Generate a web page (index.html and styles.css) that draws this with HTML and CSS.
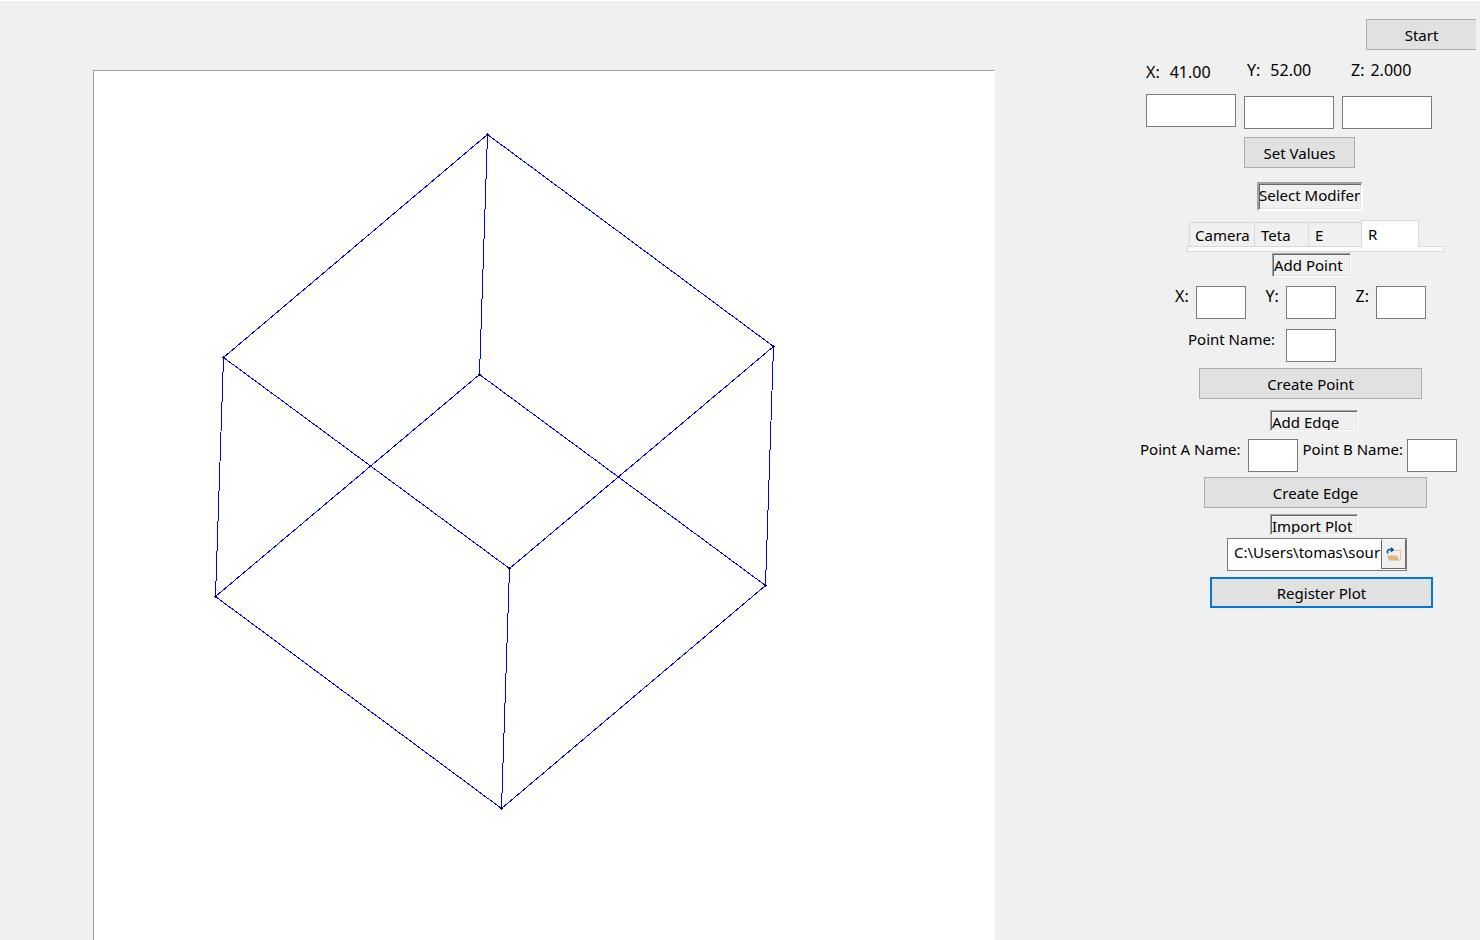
FILE: index.html
```html
<!DOCTYPE html>
<html lang="en">
<head>
<meta charset="utf-8">
<title>3D Plot</title>
<link rel="stylesheet" href="styles.css">
</head>
<body>
<main class="app">
  <section class="canvas">
    <svg class="plot" viewBox="0 0 900 869" preserveAspectRatio="xMinYMin meet" role="img" aria-label="Wireframe cube">
      <g class="edges">
        <path d="M393.5 63.5L129.500 286.500M393.500 63.500L679.500 275.500M393.500 63.500L385.500 303.500"/>
        <path d="M129.500 286.500L121.500 525.500M129.500 286.500L415.500 497.500"/>
        <path d="M385.500 303.500L121.500 525.500M385.500 303.500L671.500 514.500"/>
        <path d="M679.500 275.500L415.500 497.500M679.500 275.500L671.500 514.500"/>
        <path d="M121.500 525.500L407.500 737.500M415.500 497.500L407.500 737.500M671.500 514.500L407.500 737.500"/>
      </g>
      <g class="points">
        <path d="M392 63h3M393.500 62v3M128 286h3M129.500 285v3M678 275h3M679.500 274v3M384 303h3M385.500 302v3M120 525h3M121.500 524v3M414 497h3M415.500 496v3M670 514h3M671.500 513v3M406 737h3M407.500 736v3"/>
      </g>
    </svg>
  </section>
  <aside class="panel">
    <button class="button start">Start</button>
    <div class="coords">
      <div class="coord coord-first"><label for="vx"><span>X:</span><span>41.00</span></label><input id="vx" class="field wide"></div>
      <div class="coord"><label for="vy"><span>Y:</span><span>52.00</span></label><input id="vy" class="field wide"></div>
      <div class="coord coord-last"><label for="vz"><span>Z:</span><span>2.000</span></label><input id="vz" class="field wide"></div>
    </div>
    <button class="button set-values">Set Values</button>
    <h2 class="caption modifier">Select Modifer</h2>
    <div class="tabs">
      <div class="tablist" role="tablist">
        <button class="tab tab-wide" role="tab">Camera</button>
        <button class="tab" role="tab">Teta</button>
        <button class="tab tab-last" role="tab">E</button>
        <button class="tab active" role="tab" aria-selected="true">R</button>
      </div>
      <div class="tabpage"></div>
    </div>
    <h2 class="caption add-point">Add Point</h2>
    <div class="row point-row">
      <div class="pair"><label for="px">X:</label><input id="px" class="field"></div>
      <div class="pair"><label for="py">Y:</label><input id="py" class="field"></div>
      <div class="pair"><label for="pz">Z:</label><input id="pz" class="field"></div>
    </div>
    <div class="row name-row"><label for="pn">Point Name:</label><input id="pn" class="field"></div>
    <button class="button long create-point">Create Point</button>
    <h2 class="caption short add-edge">Add Edge</h2>
    <div class="row edge-row">
      <div class="pair"><label for="ea">Point A Name:</label><input id="ea" class="field"></div>
      <div class="pair"><label for="eb">Point B Name:</label><input id="eb" class="field"></div>
    </div>
    <button class="button long create-edge">Create Edge</button>
    <h2 class="caption short import">Import Plot</h2>
    <div class="path">
      <input class="path-text" aria-label="Plot file" value="C:\Users\tomas\sour">
      <button class="browse" aria-label="Browse">
        <svg width="16" height="16" viewBox="0 0 16 16">
          <path d="M8.500 4.500H14.500V14" fill="none" stroke="#e8c48c"/>
          <path d="M1 9.500h10l2.500 5H3z" fill="#dcb67a"/>
          <path d="M2 7.500C0 4 3.500 2.500 6.500 3.500" fill="none" stroke="#00539c" stroke-width="1.500"/>
          <path d="M5 1l3.500 3L4.500 6.500z" fill="#00539c"/>
        </svg>
      </button>
    </div>
    <button class="button long register">Register Plot</button>
  </aside>
</main>
</body>
</html>
```
FILE: styles.css
```css
* { box-sizing: border-box; }
body {
  margin: 0;
  background: #f0f0f0;
  color: #000;
  font: 15px/20px "Noto Sans", "Open Sans", sans-serif;
}
button, input { font: inherit; color: inherit; border-radius: 0; }
label { white-space: nowrap; }

.app {
  display: flex;
  height: 100vh;
  overflow: hidden;
  border-top: 1px solid #fff;
  padding-right: 4px;
}
.canvas {
  flex: 1;
  margin: 69px 145px 0 93px;
  background: #fff;
  border: 1px solid #a0a0a0;
  border-right-color: #fff;
  border-bottom: 0;
}
.plot { display: block; width: 100%; }
.edges { fill: none; stroke: #00f; shape-rendering: crispEdges; }
.points { fill: none; stroke: #000; shape-rendering: crispEdges; }

.panel {
  flex: 0 0 336px;
  display: flex;
  flex-direction: column;
  align-items: flex-start;
  padding-top: 18px;
}
.button {
  width: 111px;
  height: 31px;
  padding: 0;
  background: #e1e1e1;
  border: 1px solid #adadad;
}
.long { width: 223px; }
.start { width: 110px; align-self: flex-end; border-right: 0; }

.field {
  width: 50px;
  height: 33px;
  padding: 0 4px;
  background: #fff;
  border: 1px solid #7a7a7a;
}
.wide { width: 90px; }

.coords {
  display: flex;
  align-items: center;
  justify-content: space-between;
  width: 286px;
  margin: 10px 0 0 6px;
  font-size: 16px;
}
.coord { display: flex; flex-direction: column; gap: 16px; }
.coord-first { gap: 12px; }
.coord label { display: flex; gap: 10px; padding-left: 3px; }
.coord-first label { padding-left: 0; }
.coord-last label { padding-left: 9px; gap: 6px; }
.set-values { margin: 8px 0 0 104px; }

.caption {
  margin: 0;
  height: 24px;
  overflow: hidden;
  border: 1px solid;
  border-color: #a0a0a0 #fff #fff #a0a0a0;
  box-shadow: inset 1px 1px #696969, inset -1px -1px #e3e3e3;
  font: inherit;
  line-height: 22px;
  white-space: nowrap;
  padding-left: 1px;
}
.short { width: 88px; height: 21px; }
.modifier { width: 106px; height: 29px; border-width: 2px; margin: 14px 0 0 117px; padding-left: 0; }
.add-point { width: 79px; margin: 1px 0 0 132px; }
.add-edge { margin: 11px 0 0 130px; }
.import { margin: 6px 0 0 130px; }

.tabs { width: 257px; margin: 9px 0 0 47px; }
.tablist { display: flex; align-items: flex-end; padding-left: 2px; }
.tab {
  width: 54px;
  height: 24px;
  padding: 0 6px;
  text-align: left;
  background: #f0f0f0;
  border: 1px solid #d9d9d9;
  border-width: 1px 0 0 1px;
}
.tab-wide { width: 65px; padding: 0 5px; }
.tab-last { width: 53px; }
.active {
  position: relative;
  width: 58px;
  height: 27px;
  margin-bottom: -1px;
  padding: 0 6px 1px;
  background: #fff;
  border-width: 1px 1px 0;
}
.tabpage { height: 6px; background: #fff; border: 1px solid #d9d9d9; }

.row { display: flex; align-items: flex-start; }
.pair { display: flex; gap: 7px; }
.point-row { width: 251px; justify-content: space-between; margin: 9px 0 0 35px; font-size: 16px; }
.name-row { width: 148px; justify-content: space-between; margin: 10px 0 0 48px; }
.create-point { margin: 6px 0 0 59px; }
.edge-row { width: 317px; justify-content: space-between; margin-top: 8px; }
.edge-row .pair { gap: 8px; }
.edge-row .pair + .pair { gap: 4px; }
.create-edge { margin: 5px 0 0 64px; }

.path {
  display: flex;
  width: 180px;
  height: 33px;
  margin: 3px 0 0 87px;
  background: #fff;
  border: 1px solid #7a7a7a;
}
.path-text { flex: 1; min-width: 0; height: 26px; padding: 0 0 0 6px; border: 0; background: none; }
.browse {
  width: 25px;
  margin-bottom: 1px;
  padding: 0;
  display: flex;
  align-items: center;
  justify-content: center;
  background: #f0f0f0;
  border: 1px solid #696969;
  border-top-color: #fff;
}
.register { margin: 6px 0 0 70px; border: 2px solid #0078d7; }
```
